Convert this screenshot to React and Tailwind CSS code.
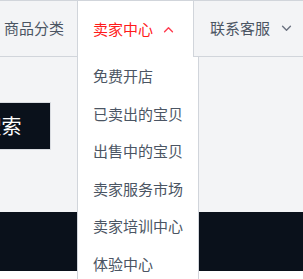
import React from 'react';

const ChevronUp = ({ className }) => (
    <svg className={className} viewBox="0 0 12 8" fill="none" stroke="currentColor" strokeWidth={1.6} strokeLinecap="round" strokeLinejoin="round"><path d="M1.5 6.5L6 2l4.5 4.5" /></svg>
);
const ChevronDown = ({ className }) => (
    <svg className={className} viewBox="0 0 12 8" fill="none" stroke="currentColor" strokeWidth={1.6} strokeLinecap="round" strokeLinejoin="round"><path d="M1.5 1.5L6 6l4.5-4.5" /></svg>
);

const menu = ['免费开店', '已卖出的宝贝', '出售中的宝贝', '卖家服务市场', '卖家培训中心', '体验中心'];

export default function App() {
    return (
        <div
            className="relative w-[303px] h-[279px] overflow-hidden bg-[#f3f4f6] flex flex-col"
            style={{ fontFamily: '"Noto Sans CJK SC", "Noto Sans", sans-serif' }}
        >
            {/* top nav */}
            <div className="h-[57px] flex-shrink-0 flex items-stretch border-t border-b border-[#d1d5db] text-[15px] text-[#4b5563]">
                <div className="w-[77px] flex items-center justify-end pr-[13px] whitespace-nowrap">商品分类</div>
                <div className="relative z-10 self-start h-[56px] w-[117px] flex items-center pl-[15px] bg-white border-l border-r border-[#d1d5db] text-[#ff1a1a] whitespace-nowrap">
                    <span>卖家中心</span>
                    <ChevronUp className="ml-[10px] w-[11px] h-[7px] text-[#ff3b4e]" />
                </div>
                <div className="flex items-center pl-[16px] whitespace-nowrap">
                    <span>联系客服</span>
                    <ChevronDown className="ml-[11px] w-[11px] h-[7px] text-[#6b7280]" />
                </div>
            </div>

            {/* page body */}
            <div className="h-[155px] flex-shrink-0 pt-[45px]">
                <button className="-ml-[48px] h-[48px] w-[99px] flex items-center justify-center bg-[#0a111b] border border-[#d9dce1] text-white text-[20px]">
                    搜索
                </button>
            </div>
            <div className="h-[59px] flex-shrink-0 bg-[#0a111b]" />
            <div className="flex-1 bg-white" />

            {/* dropdown */}
            <div className="absolute top-[57px] left-[77px] w-[122px] h-[240px] bg-white border-l border-r border-[#d1d5db]">
                {menu.map((item) => (
                    <div key={item} className="pl-[15px] py-[10px] leading-[17.5px] text-[15px] text-[#4b5563] whitespace-nowrap">
                        {item}
                    </div>
                ))}
            </div>
        </div>
    );
}
